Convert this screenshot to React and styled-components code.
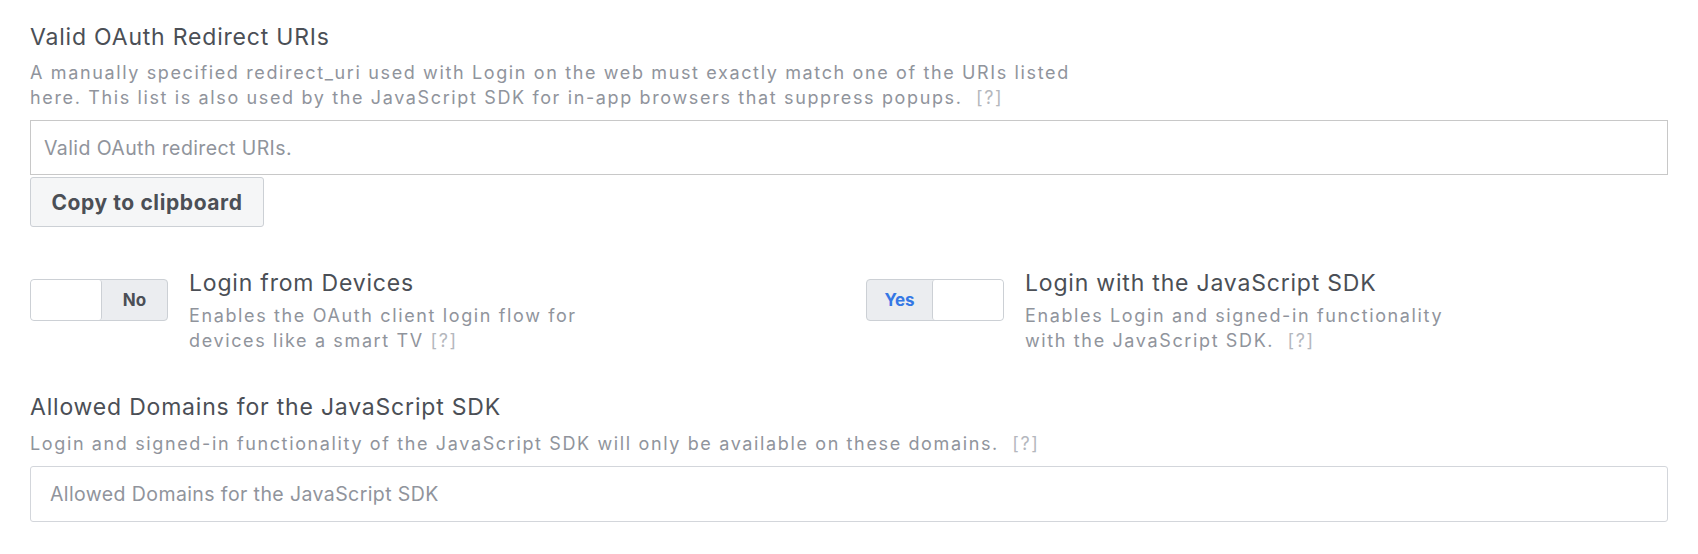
import styled, { createGlobalStyle } from "styled-components";

const GlobalStyle = createGlobalStyle`
  body {
    margin: 0;
    background: #fff;
    font-family: Inter, "Liberation Sans", Arial, sans-serif;
  }
`;

const Page = styled.div`
  padding: 23px 30px 0;
`;

const Section = styled.section`
  margin-top: ${(p) => p.$gap || 0}px;
`;

const Title = styled.div`
  font-size: 23px;
  line-height: 28px;
  color: #4b4f56;
  letter-spacing: 0.8px;
`;

const Desc = styled.div`
  margin-top: ${(p) => p.$gap || 10}px;
  max-width: ${(p) => p.$max || 1100}px;
  font-size: 18px;
  line-height: 24.5px;
  color: #90949c;
  letter-spacing: 1.63px;
`;

const Help = styled.span`
  color: #b4b7bd;
`;

const Field = styled.input`
  display: block;
  box-sizing: border-box;
  width: 100%;
  height: ${(p) => p.$h || 55}px;
  margin-top: ${(p) => p.$gap || 10}px;
  padding: 0 0 0 ${(p) => p.$pad || 13}px;
  border: 1px solid ${(p) => p.$border || "#c8c8c8"};
  border-radius: ${(p) => p.$radius || 0}px;
  font-family: Inter, "Liberation Sans", Arial, sans-serif;
  font-size: 19.5px;
  letter-spacing: 0.4px;
  color: #1c1e21;
  outline: none;
  &::placeholder {
    color: #90949c;
  }
`;

const Button = styled.button`
  display: block;
  box-sizing: border-box;
  margin-top: 2px;
  width: 234px;
  height: 50px;
  background: #f5f6f7;
  border: 1px solid #ccd0d5;
  border-radius: 3px;
  font-family: Inter, "Liberation Sans", Arial, sans-serif;
  font-weight: 700;
  font-size: 21px;
  letter-spacing: 0.6px;
  color: #4b4f56;
  cursor: pointer;
`;

const ToggleGrid = styled.div`
  display: grid;
  grid-template-columns: 1fr 1fr;
  column-gap: 34px;
  margin-top: 42px;
`;

const ToggleItem = styled.div`
  display: flex;
  align-items: flex-start;
  gap: 21px;
`;

const Switch = styled.div`
  display: flex;
  flex-direction: ${(p) => (p.$on ? "row" : "row-reverse")};
  flex: none;
  box-sizing: border-box;
  width: 138px;
  height: 42px;
  margin-top: 10px;
  background: #ebedf0;
  border: 1px solid #ccd0d5;
  border-radius: 4px;
  overflow: hidden;
`;

const SwitchLabel = styled.div`
  flex: 1;
  display: flex;
  align-items: center;
  justify-content: center;
  font-weight: 700;
  font-size: 17px;
  color: ${(p) => (p.$on ? "#3578e5" : "#4b4f56")};
`;

const Knob = styled.div`
  flex: none;
  width: 70px;
  background: #fff;
  border-${(p) => (p.$on ? "left" : "right")}: 1px solid #ccd0d5;
  border-radius: 3px;
`;

const ToggleText = styled.div`
  display: flex;
  flex-direction: column;
`;

function Toggle({ on, title, desc, max }) {
  return (
    <ToggleItem>
      <Switch $on={on}>
        <SwitchLabel $on={on}>{on ? "Yes" : "No"}</SwitchLabel>
        <Knob $on={on} />
      </Switch>
      <ToggleText>
        <Title>{title}</Title>
        <Desc $gap={7} $max={max}>
          {desc}
        </Desc>
      </ToggleText>
    </ToggleItem>
  );
}

export default function App() {
  return (
    <Page>
      <GlobalStyle />
      <Section>
        <Title>Valid OAuth Redirect URIs</Title>
        <Desc $max={1070}>
          A manually specified redirect_uri used with Login on the web must exactly match one of the URIs listed
          here. This list is also used by the JavaScript SDK for in-app browsers that suppress popups.&nbsp;{" "}
          <Help>[?]</Help>
        </Desc>
        <Field placeholder="Valid OAuth redirect URIs." />
        <Button>Copy to clipboard</Button>
      </Section>

      <ToggleGrid>
        <Toggle
          on={false}
          title="Login from Devices"
          max={410}
          desc={
            <>
              Enables the OAuth client login flow for devices like a smart TV <Help>[?]</Help>
            </>
          }
        />
        <Toggle
          on
          title="Login with the JavaScript SDK"
          max={435}
          desc={
            <>
              Enables Login and signed-in functionality with the JavaScript SDK.&nbsp; <Help>[?]</Help>
            </>
          }
        />
      </ToggleGrid>

      <Section $gap={40}>
        <Title>Allowed Domains for the JavaScript SDK</Title>
        <Desc $gap={11}>
          Login and signed-in functionality of the JavaScript SDK will only be available on these domains.&nbsp;{" "}
          <Help>[?]</Help>
        </Desc>
        <Field
          $gap={9}
          $h={56}
          $pad={19}
          $radius={3}
          $border="#d3d6db"
          placeholder="Allowed Domains for the JavaScript SDK"
        />
      </Section>
    </Page>
  );
}
